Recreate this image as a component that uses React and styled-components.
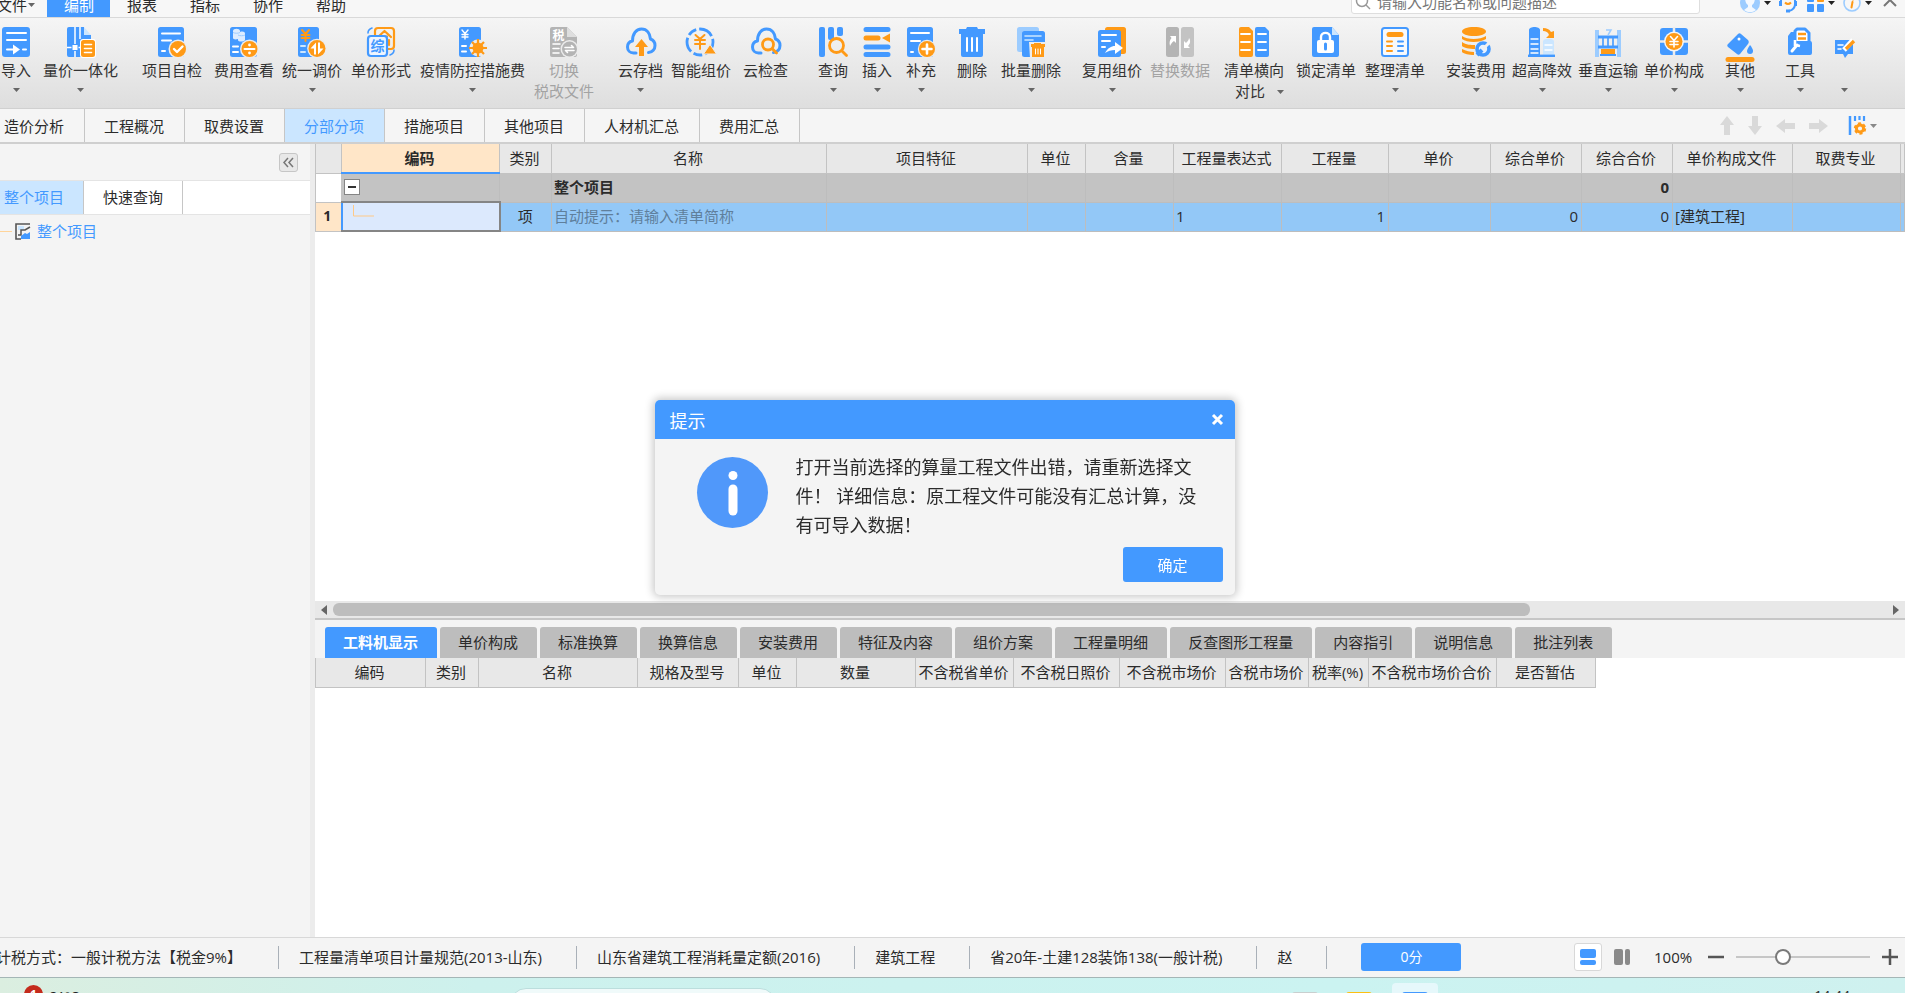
import React, { useState } from 'react'
import styled, { createGlobalStyle, css } from 'styled-components'

const BLUE = '#4399ff'
const ORANGE = '#ff9a16'
const LIGHT_BLUE = '#cbe6ff'
const SKY = '#9cccff'
const GREY = '#b4b4b4'
const PANEL = '#f4f4f4'
const LINE = '#c3c3c3'

const GlobalStyle = createGlobalStyle`
  * {
    box-sizing: border-box;
  }
  body {
    margin: 0;
    color: #2b2b2b;
    background: ${PANEL};
    font-family: "Open Sans", "Noto Sans CJK SC", sans-serif;
    font-size: 15px;
    line-height: 20px;
  }
  button, input {
    font: inherit;
    color: inherit;
    border: 0;
    padding: 0;
    margin: 0;
    background: none;
  }
  svg {
    display: block;
    overflow: visible;
    flex: none;
  }
`

const Page = styled.div`
  display: flex;
  flex-direction: column;
  height: 100vh;
  overflow: hidden;
`

/* menu bar */

const MenuBar = styled.nav`
  display: flex;
  flex: none;
  align-items: flex-end;
  height: 18px;
  overflow: hidden;
  background: #f7f7f7;
  border-bottom: 1px solid #d9d9d9;
`

const MenuItem = styled.button`
  flex: none;
  height: 24px;
  padding: 0 16px 0 17px;
  white-space: nowrap;
  ${props => props.$active && css`
    color: #fff;
    background: ${BLUE};
  `}
`

const FileItem = styled.button`
  display: flex;
  flex: none;
  align-items: center;
  justify-content: flex-end;
  gap: 1px;
  width: 47px;
  height: 24px;
  padding-right: 12px;
  white-space: nowrap;
`

const SearchBox = styled.label`
  display: flex;
  align-items: center;
  gap: 6px;
  width: 349px;
  height: 24px;
  margin: 0 40px 3px auto;
  padding: 0 3px;
  background: #fff;
  border: 1px solid #dedede;
  border-radius: 3px;
`

const SearchInput = styled.input`
  flex: 1;
  min-width: 0;
  outline: 0;
  &::placeholder {
    color: #777;
    opacity: 1;
  }
`

const MenuIcons = styled.div`
  display: flex;
  align-items: center;
  gap: 6px;
  height: 28px;
  padding-right: 8px;
`

const IconButton = styled.button`
  display: flex;
  align-items: center;
  gap: 4px;
  padding-right: ${props => props.$pad || 0}px;
`

/* ribbon */

const Ribbon = styled.div`
  display: flex;
  flex: none;
  height: 91px;
  padding-left: 1px;
  overflow: hidden;
  background: linear-gradient(#f5f5f5, #dedede);
  border-bottom: 1px solid #d0d0d0;
`

const Tool = styled.button`
  display: flex;
  flex: none;
  flex-direction: column;
  align-items: center;
  width: ${props => props.$width}px;
  margin-left: ${props => props.$gap}px;
  padding-top: 9px;
  line-height: 21px;
  white-space: nowrap;
  color: ${props => props.disabled ? '#a3a3a3' : '#333'};
`

const ToolLabel = styled.span`
  height: 21px;
  margin-top: 3px;
`

const ToolSecond = styled.span`
  display: flex;
  align-items: center;
  justify-content: ${props => props.$split ? 'flex-end' : 'center'};
  gap: 12px;
  width: 100%;
  height: ${props => props.$bare ? 17 : 21}px;
`

/* section tabs */

const SectionBar = styled.div`
  display: flex;
  flex: none;
  align-items: stretch;
  height: 35px;
  background: #f5f5f5;
  border-bottom: 2px solid #cfcfcf;
`

const SectionTab = styled.button`
  padding: 0 20px 0 19px;
  border-right: 1px solid #c6c6c6;
  white-space: nowrap;
  &:first-child {
    padding-left: 4px;
  }
  ${props => props.$active && css`
    color: ${BLUE};
    background: ${LIGHT_BLUE};
  `}
`

const SectionActions = styled.div`
  display: flex;
  align-items: center;
  gap: 12px;
  margin-left: auto;
  padding-right: 28px;
`

/* work area */

const Work = styled.div`
  display: flex;
  flex: 1;
  min-height: 0;
`

const Side = styled.aside`
  flex: none;
  width: 315px;
  background: ${PANEL};
  border-right: 5px solid #ececec;
`

const SideTop = styled.div`
  display: flex;
  align-items: center;
  justify-content: flex-end;
  height: 36px;
  padding-right: 12px;
`

const CollapseButton = styled.button`
  display: flex;
  align-items: center;
  justify-content: center;
  width: 19px;
  height: 19px;
  background: #e8e8e8;
  border: 1px solid #c6c6c6;
  border-radius: 3px;
`

const SideTabs = styled.div`
  display: flex;
  height: 35px;
  background: #fff;
  border-top: 1px solid #e4e4e4;
  border-bottom: 1px solid #e4e4e4;
`

const SideTab = styled(SectionTab)`
  padding: 0 19px 2px;
`

const TreeItem = styled.a`
  display: flex;
  align-items: center;
  height: 32px;
  color: ${BLUE};
  text-decoration: none;
`

const TreeText = styled.span`
  padding-left: 6px;
`

const Content = styled.main`
  display: flex;
  flex: 1;
  flex-direction: column;
  min-width: 0;
`

const UpperPane = styled.div`
  flex: 457 1 0;
  min-height: 0;
  overflow: hidden;
  background: #fff;
`

const LowerPane = styled(UpperPane)`
  flex: 279 1 0;
`

const Grid = styled.table`
  width: 100%;
  table-layout: fixed;
  border-collapse: collapse;
  white-space: nowrap;
`

const HeadCell = styled.th`
  height: 29px;
  padding: 0 2px 0 0;
  font-weight: ${props => props.$active ? 700 : 400};
  background: ${props => props.$active ? '#ffe6c8' : '#e8e8e8'};
  border: 1px solid ${LINE};
  border-top: 0;
  ${props => props.$active && css`
    border-bottom: 2px solid ${BLUE};
  `}
`

const Cell = styled.td`
  height: 29px;
  padding: 0 3px 2px 2px;
  text-align: ${props => props.$align || 'left'};
  border: 1px solid #bdbdbd;
  overflow: hidden;
`

const GroupRow = styled.tr`
  font-weight: 700;
  background: #c3c3c3;
`

const ItemRow = styled.tr`
  background: #93c8f7;
`

const RowNumber = styled.th`
  padding: 0 2px 2px 0;
  font-size: 14px;
  border: 1px solid ${LINE};
  background: ${props => props.$active ? '#ffe6c8' : '#fff'};
`

const SelectedCell = styled.td`
  padding: 0 10px 3px;
  background: #dce9fd;
  border: 2px solid #858585;
  border-left-color: ${BLUE};
`

const Hint = styled.span`
  color: #5f7f9c;
`

const FoldButton = styled.button`
  display: flex;
  align-items: center;
  justify-content: center;
  width: 16px;
  height: 16px;
  background: #fff;
  border: 1px solid #858585;
`

const ScrollBar = styled.div`
  display: flex;
  flex: none;
  align-items: center;
  gap: 6px;
  height: 17px;
  padding: 0 6px;
  background: #e8e8e8;
`

const ScrollTrack = styled.div`
  flex: 1;
`

const ScrollThumb = styled.div`
  width: 77%;
  height: 13px;
  border-radius: 6px;
  background: #bdbdbd;
`

const DetailTabs = styled.div`
  display: flex;
  flex: none;
  align-items: flex-end;
  gap: 3px;
  height: 40px;
  padding: 0 10px;
  background: ${PANEL};
  border-top: 2px solid #c6c6c6;
`

const DetailTab = styled.button`
  height: 31px;
  padding: 0 19px 2px 18px;
  white-space: nowrap;
  background: #bdbdbd;
  border-radius: 3px 3px 0 0;
  ${props => props.$active && css`
    color: #fff;
    font-weight: 700;
    background: ${BLUE};
  `}
`

const DetailGrid = styled(Grid)`
  width: 1280px;
`

/* status bar */

const StatusBar = styled.footer`
  display: flex;
  flex: none;
  align-items: center;
  height: 41px;
  padding-bottom: 1px;
  background: ${PANEL};
  border-top: 1px solid #d8d8d8;
  border-bottom: 1px solid #a4b6b6;
  white-space: nowrap;
`

const StatusItem = styled.span`
  flex: none;
  margin-left: 20px;
  padding-right: 34px;
  &:first-child {
    display: flex;
    justify-content: flex-end;
    width: 278px;
    padding-right: 36px;
    margin: 0;
  }
`

const Separator = styled.span`
  width: 1px;
  height: 23px;
  background: #a9b0b8;
`

const ScoreButton = styled.button`
  width: 100px;
  height: 28px;
  margin-left: 34px;
  font-size: 14px;
  color: #fff;
  background: ${BLUE};
  border-radius: 3px;
`

const ViewTools = styled.div`
  display: flex;
  align-items: center;
  gap: 12px;
  margin-left: auto;
  padding-right: 7px;
`

const ViewButton = styled.button`
  display: flex;
  align-items: center;
  justify-content: center;
  height: 28px;
  ${props => props.$active && css`
    width: 28px;
    background: #fff;
    border: 1px solid #d8d8d8;
    border-radius: 3px;
  `}
`

const ZoomValue = styled.output`
  width: 42px;
  margin-left: 12px;
`

const ZoomSlider = styled.input`
  width: 134px;
  height: 16px;
  appearance: none;
  &::-webkit-slider-runnable-track {
    height: 2px;
    background: #c6c6c6;
  }
  &::-webkit-slider-thumb {
    appearance: none;
    width: 16px;
    height: 16px;
    margin-top: -7px;
    background: #fff;
    border: 2px solid #7a7a7a;
    border-radius: 50%;
  }
`

/* desktop task bar */

const TaskBar = styled.div`
  display: flex;
  flex: none;
  align-items: flex-start;
  height: 15px;
  overflow: hidden;
  background: linear-gradient(90deg, #dbeee0, #cdf1ed 25%, #cbf3f1 70%, #cff1ef);
`

const Badge = styled.span`
  flex: none;
  width: 19px;
  height: 19px;
  margin: 7px 7px 0 24px;
  font-size: 12px;
  font-weight: 700;
  line-height: 19px;
  text-align: center;
  color: #fff;
  background: #c42b1c;
  border-radius: 50%;
`

const Temperature = styled.span`
  width: 460px;
  margin-top: 10px;
  font-size: 13px;
  line-height: 16px;
  color: #222;
`

const TaskSearch = styled.span`
  width: 266px;
  height: 32px;
  margin-top: 10px;
  background: #f0fafa;
  border: 1px solid #bcdedd;
  border-radius: 16px;
`

const TaskApps = styled.div`
  display: flex;
  align-items: flex-start;
  gap: 28px;
  margin-left: 516px;
`

const TaskApp = styled.span`
  width: 26px;
  height: 24px;
  margin-top: 14px;
  background: ${props => props.$color};
  border-radius: 3px;
`

const TaskWindow = styled.span`
  display: flex;
  justify-content: center;
  width: 46px;
  height: 36px;
  margin-left: -8px;
  margin-top: 5px;
  background: #e6f8fb;
  border-radius: 4px;
`

const TaskWindowIcon = styled.span`
  width: 26px;
  height: 20px;
  margin-top: 9px;
  background: ${BLUE};
  border-radius: 3px;
`

const Clock = styled.span`
  margin: 9px 55px 0 auto;
  font-size: 14px;
  line-height: 18px;
`

/* message box */

const Overlay = styled.div`
  position: fixed;
  inset: 0;
  display: flex;
  align-items: center;
  justify-content: center;
  padding: 2px 16px 0 0;
`

const Dialog = styled.section`
  width: 580px;
  overflow: hidden;
  background: ${PANEL};
  border-radius: 5px;
  box-shadow: 0 0 8px 2px rgba(0, 0, 0, 0.22);
`

const DialogTitle = styled.header`
  display: flex;
  align-items: center;
  justify-content: space-between;
  height: 39px;
  padding: 2px 11px 0 15px;
  font-size: 18px;
  color: #fff;
  background: ${BLUE};
`

const DialogBody = styled.div`
  display: flex;
  gap: 28px;
  padding: 14px 32px 0 42px;
`

const DialogIcon = styled.div`
  padding-top: 4px;
`

const Message = styled.p`
  flex: 1;
  margin: 0;
  font-size: 18px;
  line-height: 29px;
`

const DialogFooter = styled.div`
  display: flex;
  justify-content: flex-end;
  padding: 7px 12px 13px;
`

const OkButton = styled.button`
  width: 100px;
  height: 35px;
  color: #fff;
  background: ${BLUE};
  border-radius: 3px;
`

const Caret = ({ color = '#666' }) => (
  <svg width="7" height="4" viewBox="0 0 7 4"><path d="M0 0h7L3.5 4z" fill={color}/></svg>
)

const Rules = ({ d, color = '#fff', width = 2 }) => (
  <path d={d} stroke={color} strokeWidth={width} strokeLinecap="round" strokeLinejoin="round" fill="none"/>
)

const Glyph = ({ x, y, size, color = '#fff', children }) => (
  <text x={x} y={y} fontSize={size} fontWeight="700" fill={color} textAnchor="middle">{children}</text>
)

const Cloud = () => (
  <Rules color={BLUE} width={3} d="M10 26H7.500C4 26 1.500 23.500 1.500 20c0-3 2-5.500 5-6C6.500 7 10 2 15.500 2S24 6.500 24.500 12c2.800 1 4.500 3 4.500 6.500 0 3.500-2.500 7-6.500 7"/>
)

const Lens = ({ x, y, r = 6 }) => (
  <g stroke={ORANGE} strokeWidth="2.800" fill="none" strokeLinecap="round">
    <circle cx={x} cy={y} r={r}/>
    <path d={`M${x + r - 1} ${y + r - 1}l4 4`}/>
  </g>
)

const icons = {
  import: (
    <g>
      <rect x="1" width="28" height="30" rx="3" fill={BLUE}/>
      <Rules d="M6 6h19M6 13h19M6 22.500h8M22 22.500h3"/>
      <path d="M12 17.500l7 5-7 5z" fill="#fff"/>
    </g>
  ),
  merge: (
    <g>
      <path d="M3 0h15v8h7v22H3a2 2 0 0 1-2-2V2a2 2 0 0 1 2-2z" fill={BLUE}/>
      <path d="M18 0l7 8h-7z" fill={LIGHT_BLUE}/>
      <path d="M9 0v30M1 20.500h15M14 0v12" stroke="#fff" strokeWidth="1.500"/>
      <rect x="6" y="17.500" width="6" height="6" fill="#fff" stroke={BLUE}/>
      <rect x="14" y="12" width="16" height="19" rx="3" fill="#fff"/>
      <rect x="15" y="13" width="14" height="17" rx="2.500" fill={ORANGE}/>
      <Rules d="M18.500 17.500h7M18.500 21.500h7M18.500 25.500h7" width={1.6}/>
    </g>
  ),
  check: (
    <g>
      <rect x="1" width="26" height="30" rx="2.500" fill={BLUE}/>
      <Rules d="M5 6.500h18M5 13.500h9M5 24h3"/>
      <circle cx="21" cy="22" r="9.500" fill="#ececec"/>
      <circle cx="21" cy="22" r="8" fill={ORANGE}/>
      <Rules d="M17 22l3 3 5.500-5.500" width={2.4}/>
    </g>
  ),
  fee: (
    <g>
      <rect x="1" width="27" height="30" rx="2.500" fill={BLUE}/>
      <path d="M4 4c0-3 7-3 7 0v1c3-1 5 0 5 1.500V13c-1 2-7 2-7 0v-1c-3 1-5 0-5-1z" fill="#dcecff"/>
      <path d="M4 5.500c2 1 5 1 7 0M9 8c2 1 5 1 7 0" stroke={SKY} fill="none"/>
      <Rules d="M4 19.500h5M4 25h5"/>
      <circle cx="20.500" cy="22" r="9.500" fill="#ececec"/>
      <circle cx="20.500" cy="22" r="8" fill={ORANGE}/>
      <Rules d="M15.500 22h10" width={2}/>
      <circle cx="20.500" cy="18" r="1.400" fill="#fff"/>
      <circle cx="20.500" cy="26" r="1.400" fill="#fff"/>
    </g>
  ),
  adjust: (
    <g>
      <rect x="1" width="21" height="30" rx="2.500" fill={BLUE}/>
      <Rules color={ORANGE} d="M5 3l3.500 4L12 3M8.500 7v7M4.500 8h8M4.500 11h8" width={2}/>
      <Rules d="M4 19h4M4 25h4" color={LIGHT_BLUE}/>
      <circle cx="20" cy="21.500" r="9.800" fill="#ececec"/>
      <circle cx="20" cy="21.500" r="8.500" fill={ORANGE}/>
      <path d="M19 15.500v12h-2v-6h-3.500zM21 27.500v-12h2v6h3.500z" fill="#fff"/>
    </g>
  ),
  form: (
    <g>
      <rect x="9" y="1" width="19" height="21" rx="3" fill="none" stroke={ORANGE} strokeWidth="2.200"/>
      <Rules color={ORANGE} d="M12 10l6.500-6 6.500 6M16 9.500h5M23 13v5" width={2.2}/>
      <rect x="2" y="9" width="19" height="20" rx="3" fill="#eef5ff" stroke={BLUE} strokeWidth="2.200"/>
      <Glyph x="11.500" y="24" size="14" color={BLUE}>综</Glyph>
      <Rules color={BLUE} d="M2 6c0-2 1-4 4-5M28 23c0 3-1 4-4 5" width={1.6}/>
    </g>
  ),
  covid: (
    <g>
      <rect x="1" width="22" height="30" rx="2.500" fill={BLUE}/>
      <Rules d="M4 3l3 3.500L10 3M7 6.500V12M4 7.500h6M4 10h6" width={1.4}/>
      <Rules d="M4 19h4M4 24.500h4"/>
      <circle cx="20" cy="21" r="8.500" fill="#ececec"/>
      <path d="M20 12v18M11 21h18M14 15l12 12M26 15L14 27" stroke={ORANGE} strokeWidth="2.200"/>
      <circle cx="20" cy="21" r="5.500" fill={ORANGE}/>
    </g>
  ),
  tax: (
    <g>
      <path d="M3 0h15l10 10v18a2 2 0 0 1-2 2H3a2 2 0 0 1-2-2V2a2 2 0 0 1 2-2z" fill={GREY}/>
      <path d="M18 0l10 10H18z" fill="#dedede"/>
      <Glyph x="9.500" y="13" size="12">税</Glyph>
      <Rules d="M4 17h7M4 21.500h6M4 26h6" width={1.6}/>
      <circle cx="20.500" cy="22" r="9" fill="#ececec"/>
      <circle cx="20.500" cy="22" r="7.500" fill={GREY}/>
      <Rules d="M16 20.500h8.500l-2-2M25 23.500h-8.500l2 2" width={1.6}/>
    </g>
  ),
  cloudUp: (
    <g>
      <Cloud/>
      <path d="M15.500 12l6.500 8h-4v9h-5v-9H9z" fill={ORANGE}/>
    </g>
  ),
  smart: (
    <g>
      <circle cx="14" cy="15" r="13" fill="none" stroke={BLUE} strokeWidth="2.800" strokeDasharray="15 3 9 3"/>
      <Rules color={ORANGE} d="M9.500 8l4.500 4 4.500-4M14 12v10M9 13h10M9 17h10" width={2}/>
      <path d="M24 17.500l6.500 9.500H17.500z" fill={ORANGE} stroke="#ececec"/>
    </g>
  ),
  cloudFind: (
    <g>
      <Cloud/>
      <Lens x={17} y={17.5} r={5.5}/>
    </g>
  ),
  query: (
    <g>
      <rect x="1" width="6" height="30" rx="2" fill={BLUE}/>
      <rect x="10" width="6" height="13" rx="2" fill={BLUE}/>
      <rect x="19" width="6" height="9" rx="2" fill={BLUE}/>
      <Lens x={18.5} y={18.5} r={7}/>
    </g>
  ),
  insert: (
    <g>
      <Rules color={BLUE} d="M4 2.500h22M4 20h22M4 27.500h22" width={5}/>
      <Rules color={ORANGE} d="M4 11h12" width={5}/>
      <path d="M28 6.500v9L20 11z" fill={ORANGE}/>
    </g>
  ),
  append: (
    <g>
      <rect x="1" width="26" height="30" rx="2.500" fill={BLUE}/>
      <Rules d="M5 6h18M5 14h9M5 25h2"/>
      <circle cx="21" cy="22" r="9.200" fill="#ececec"/>
      <circle cx="21" cy="22" r="8" fill={ORANGE}/>
      <Rules d="M16.500 22h9M21 17.500v9" width={2.6}/>
    </g>
  ),
  remove: (
    <g>
      <path d="M10 0h10l1 2h7v5H2V2h7z" fill={BLUE}/>
      <path d="M4 6h22v22a2 2 0 0 1-2 2H6a2 2 0 0 1-2-2z" fill={BLUE}/>
      <Rules d="M10 11v13M15 11v13M20 11v13"/>
    </g>
  ),
  batch: (
    <g>
      <rect x="1" width="22" height="25" rx="2.500" fill={SKY}/>
      <rect x="6" y="4" width="23" height="26" rx="2.500" fill={BLUE}/>
      <Rules color={LIGHT_BLUE} d="M9 9h16M9 13h8" width={1.6}/>
      <path d="M13 15h17v16H14z" fill="#ececec"/>
      <path d="M18 16h7v1h4v3H15v-3h3z" fill={ORANGE}/>
      <path d="M16 20h12v10H16z" fill={ORANGE}/>
      <Rules d="M19.500 22v5M22 22v5M24.500 22v5" width={1}/>
    </g>
  ),
  reuse: (
    <g>
      <rect x="8" width="21" height="27" rx="2.500" fill={ORANGE}/>
      <rect x="1" y="3" width="23" height="27" rx="2.500" fill={BLUE}/>
      <Rules d="M5 8h14M5 14h8M5 20h3"/>
      <path d="M8 26c3-5 6-7 10-7v-4l8 6-8 6v-4c-4 0-7 1-10 3z" fill="#fff"/>
    </g>
  ),
  replace: (
    <g fill={GREY}>
      <rect x="1" width="13" height="30" rx="2.500"/>
      <rect x="16" width="13" height="30" rx="2.500" fill="#c3c3c3"/>
      <path d="M5 9h6v7l-2-2c-2 1-3 3-4 5-1-4 0-6 1.500-8z" fill="#fff"/>
      <path d="M25 21h-6v-7l2 2c1-1 3-3 3-5 2 3 1 6-1 8z" fill="#fff"/>
    </g>
  ),
  compare: (
    <g>
      <path d="M2 0h8l4 4v24a2 2 0 0 1-2 2H2a2 2 0 0 1-2-2V2a2 2 0 0 1 2-2z" fill={ORANGE}/>
      <path d="M18 0h8l4 4v24a2 2 0 0 1-2 2H18a2 2 0 0 1-2-2V2a2 2 0 0 1 2-2z" fill={BLUE}/>
      <Rules d="M2 7h9M2 15h9M2 23h9M19 7h8M19 15h8M19 23h8" width={1.8}/>
    </g>
  ),
  lock: (
    <g>
      <path d="M3 0h18l7 8v20a2 2 0 0 1-2 2H3a2 2 0 0 1-2-2V2a2 2 0 0 1 2-2z" fill={BLUE}/>
      <path d="M21 0l7 8h-7z" fill={LIGHT_BLUE}/>
      <rect x="6" y="13" width="17" height="13" rx="2" fill="#fff"/>
      <Rules d="M10 13V10c0-5.500 9-5.500 9 0v3" width={2.4}/>
      <path d="M14.500 17v5" stroke={BLUE} strokeWidth="3" strokeLinecap="round"/>
    </g>
  ),
  tidy: (
    <g>
      <rect x="2" y="1" width="26" height="28" rx="2.500" fill="#f7f9fc" stroke={BLUE} strokeWidth="2"/>
      <Rules color={ORANGE} d="M9 7.500h12" width={5}/>
      <Rules color={ORANGE} d="M7 14.500h5M7 19h5M7 24h5"/>
      <Rules color={BLUE} d="M18 14.500h5M18 19h5M18 24h5"/>
    </g>
  ),
  install: (
    <g>
      <path d="M1 4.500C1 2 6 0 13 0s12 2 12 4.500S20 9 13 9 1 7 1 4.500zM1 9c5 4 18 4 24 0v3c-6 4-19 4-24 0zM1 15c4 3 9 3 13 3v4C8 22 3 21 1 19zM1 22c4 2 8 3 12 3v3c-5 0-10-1-12-3z" fill={ORANGE}/>
      <circle cx="22" cy="22" r="6" fill="#e8f2ff" stroke={BLUE} strokeWidth="3.600"/>
      <path d="M21 23l-5 5" stroke={BLUE} strokeWidth="4"/>
      <path d="M22 22l6-6" stroke="#f0f0f0" strokeWidth="3"/>
    </g>
  ),
  height: (
    <g>
      <path d="M2 3c0-4 11-4 11 0v27H2z" fill={BLUE}/>
      <Rules d="M4 12h7M4 17h7M4 22h7M4 26h7" width={1.4}/>
      <path d="M16 14c1-3 10-3 11 0v14H16z" fill={LIGHT_BLUE}/>
      <Rules d="M18 18h7M18 23h7" width={1.4}/>
      <path d="M1 28.800h27" stroke={BLUE} strokeWidth="2.400"/>
      <path d="M16 1c4 0 6 1 8 4l3-1v7h-8l3-3c-1-3-3-4-6-4z" fill={ORANGE}/>
    </g>
  ),
  lift: (
    <g>
      <path d="M4 3v27M26 3v27" stroke={SKY} strokeWidth="4"/>
      <path d="M5 10h20M5 20h20" stroke={BLUE} strokeWidth="3"/>
      <path d="M10 10v10M15 10v10M20 10v10" stroke={BLUE} strokeWidth="1.600"/>
      <path d="M13 3h5l-3 5" stroke={SKY} strokeWidth="1.500" fill="none"/>
      <path d="M8 22h14v5H8z" fill={ORANGE}/>
      <path d="M7 28h16" stroke={BLUE} strokeWidth="2"/>
    </g>
  ),
  compose: (
    <g>
      <rect x="1" y="1" width="28" height="27" rx="3" fill={BLUE}/>
      <path d="M15 0v30M0 14.500h30" stroke="#ececec" strokeWidth="2.500"/>
      <circle cx="15" cy="14.500" r="10" fill="#f6f6f6"/>
      <circle cx="15" cy="14.500" r="8.500" fill={ORANGE}/>
      <Rules d="M11.500 9.500l3.500 4 3.500-4M15 13.500V20M11 14.500h8M11 17.500h8" width={1.6}/>
    </g>
  ),
  other: (
    <g>
      <path d="M13 7c1-1 2-1 3 0l7 6c1 1 1 3 0 4l-8 10c-1 1-2 1-3 0l-9-7c-1-1-1-2 0-3z" fill={BLUE}/>
      <circle cx="14" cy="12" r="1.500" fill="#fff"/>
      <path d="M25 18c3 4 3 5 3 6a3 3 0 0 1-6 0c0-1 1-3 3-6z" fill={BLUE}/>
      <path d="M3 32.500h24" stroke={ORANGE} strokeWidth="5" strokeLinecap="round"/>
    </g>
  ),
  tools: (
    <g>
      <path d="M12 2h8l4 4v11H10V4z" fill="#fff" stroke={BLUE} strokeWidth="3" strokeLinejoin="round"/>
      <path d="M13 7h8M13 11.500h8" stroke={ORANGE} strokeWidth="2.400"/>
      <path d="M6 5h3v9h16a2 2 0 0 1 2 2v10a2 2 0 0 1-2 2H5a2 2 0 0 1-2-2V9z" fill={BLUE}/>
      <path d="M7 24l5-6" stroke="#fff" strokeWidth="3" strokeLinecap="round"/>
      <path d="M10 13v5l5 1" stroke="#fff" strokeWidth="2.600" fill="none"/>
    </g>
  ),
  note: (
    <g>
      <path d="M6 13h18v14h-5l-3 4-2-4H6z" fill={BLUE}/>
      <Rules d="M9 18h5M9 22h3" width={1.6}/>
      <path d="M15 23l9-10" stroke="#fff" strokeWidth="5"/>
      <path d="M17 22l8-8" stroke={ORANGE} strokeWidth="3.400"/>
    </g>
  )
}

// gap is the space before the button, width follows the label
const tools = [
  { icon: 'import', label: '导入', width: 30, gap: 0, menu: true },
  { icon: 'merge', label: '量价一体化', width: 75, gap: 12, menu: true },
  { icon: 'check', label: '项目自检', width: 60, gap: 24 },
  { icon: 'fee', label: '费用查看', width: 60, gap: 12 },
  { icon: 'adjust', label: '统一调价', width: 60, gap: 8, menu: true },
  { icon: 'form', label: '单价形式', width: 60, gap: 9 },
  { icon: 'covid', label: '疫情防控措施费', width: 105, gap: 9, menu: true },
  { icon: 'tax', label: '切换', second: '税改文件', width: 60, gap: 9, disabled: true },
  { icon: 'cloudUp', label: '云存档', width: 45, gap: 24, menu: true },
  { icon: 'smart', label: '智能组价', width: 60, gap: 8 },
  { icon: 'cloudFind', label: '云检查', width: 45, gap: 12 },
  { icon: 'query', label: '查询', width: 30, gap: 30, menu: true },
  { icon: 'insert', label: '插入', width: 30, gap: 14, menu: true },
  { icon: 'append', label: '补充', width: 30, gap: 14, menu: true },
  { icon: 'remove', label: '删除', width: 30, gap: 21 },
  { icon: 'batch', label: '批量删除', width: 60, gap: 14, menu: true },
  { icon: 'reuse', label: '复用组价', width: 60, gap: 21, menu: true },
  { icon: 'replace', label: '替换数据', width: 60, gap: 8, disabled: true },
  { icon: 'compare', label: '清单横向', second: '对比', width: 60, gap: 14, menu: true },
  { icon: 'lock', label: '锁定清单', width: 60, gap: 12 },
  { icon: 'tidy', label: '整理清单', width: 60, gap: 9, menu: true },
  { icon: 'install', label: '安装费用', width: 60, gap: 21, menu: true },
  { icon: 'height', label: '超高降效', width: 60, gap: 6, menu: true },
  { icon: 'lift', label: '垂直运输', width: 60, gap: 6, menu: true },
  { icon: 'compose', label: '单价构成', width: 60, gap: 6, menu: true },
  { icon: 'other', label: '其他', width: 30, gap: 21, menu: true },
  { icon: 'tools', label: '工具', width: 30, gap: 30, menu: true },
  { icon: 'note', label: '', width: 30, gap: 14, menu: true }
]

const menus = ['编制', '报表', '指标', '协作', '帮助']

const sections = ['造价分析', '工程概况', '取费设置', '分部分项', '措施项目', '其他项目', '人材机汇总', '费用汇总']

const columns = [
  ['', 26], ['编码', 158], ['类别', 52], ['名称', null], ['项目特征', 201], ['单位', 58], ['含量', 88],
  ['工程量表达式', 108], ['工程量', 107], ['单价', 102], ['综合单价', 91], ['综合合价', 91],
  ['单价构成文件', 120], ['取费专业', 108], ['', 4]
]

const detailTabs = [
  '工料机显示', '单价构成', '标准换算', '换算信息', '安装费用', '特征及内容',
  '组价方案', '工程量明细', '反查图形工程量', '内容指引', '说明信息', '批注列表'
]

const detailColumns = [
  ['编码', 110], ['类别', 53], ['名称', 159], ['规格及型号', 101], ['单位', 58], ['数量', 119],
  ['不含税省单价', 98], ['不含税日照价', 106], ['不含税市场价', 106], ['含税市场价', 83],
  ['税率(%)', 60], ['不含税市场价合价', 128], ['是否暂估', 99]
]

const statusItems = [
  '计税方式：一般计税方法【税金9%】',
  '工程量清单项目计量规范(2013-山东)',
  '山东省建筑工程消耗量定额(2016)',
  '建筑工程',
  '省20年-土建128装饰138(一般计税)',
  '赵'
]

const arrows = [
  ['上移', 'M7 0l7 9h-4v10H4V9H0z', 14, 19],
  ['下移', 'M7 19l7-9h-4V0H4v10H0z', 14, 19],
  ['左移', 'M0 7l9-7v4h10v6H9v4z', 19, 14],
  ['右移', 'M19 7l-9-7v4H0v6h10v4z', 19, 14]
]

const ToolButton = ({ icon, label, second, width, gap, menu, disabled }) => (
  <Tool $width={width} $gap={gap} disabled={disabled} aria-label={label || '批注'}>
    <svg width="30" height="30" viewBox="0 0 30 30">{icons[icon]}</svg>
    <ToolLabel>{label}</ToolLabel>
    <ToolSecond $split={second && menu} $bare={!second}>
      {second}
      {menu && <Caret/>}
    </ToolSecond>
  </Tool>
)

const TopMenu = () => (
  <MenuBar>
    <FileItem>文件<Caret/></FileItem>
    {menus.map(name => (
      <MenuItem key={name} $active={name === '编制'}>{name}</MenuItem>
    ))}
    <SearchBox>
      <svg width="16" height="16" viewBox="0 0 16 16" fill="none" stroke="#999" strokeWidth="1.500">
        <circle cx="7" cy="7" r="5.500"/>
        <path d="M11 11l4 4"/>
      </svg>
      <SearchInput aria-label="搜索" placeholder="请输入功能名称或问题描述"/>
    </SearchBox>
    <MenuIcons>
      <IconButton $pad={2} aria-label="用户">
        <svg width="20" height="20" viewBox="0 0 20 20">
          <circle cx="10" cy="10" r="10" fill={SKY}/>
          <path d="M5 4h10c0 4-1 7-3 8v2l4 3c-4 3-8 3-12 0l4-3v-2c-2-1-3-4-3-8z" fill="#f4f9ff"/>
        </svg>
        <Caret color="#222"/>
      </IconButton>
      <IconButton $pad={4} aria-label="客服">
        <svg width="18" height="20" viewBox="0 0 18 20" fill="none" stroke={BLUE} strokeWidth="2">
          <path d="M2 10V8a7 7 0 0 1 14 0v3c0 4-2 6-6 7"/>
          <path d="M1.500 8v5M16.500 8v5" strokeWidth="3"/>
          <path d="M6 9.500c2 2 4 2 6 0" stroke={ORANGE}/>
          <path d="M7 18h4" strokeWidth="3"/>
        </svg>
      </IconButton>
      <IconButton $pad={2} aria-label="应用">
        <svg width="17" height="18" viewBox="0 0 17 18" fill={BLUE}>
          <rect width="7" height="8" rx="1"/>
          <rect x="10" width="7" height="8" rx="1" fill={ORANGE}/>
          <rect y="10" width="7" height="8" rx="1"/>
          <rect x="10" y="10" width="7" height="8" rx="1"/>
        </svg>
        <Caret color="#222"/>
      </IconButton>
      <IconButton $pad={5} aria-label="信息">
        <svg width="18" height="18" viewBox="0 0 18 18">
          <circle cx="9" cy="9" r="8" fill="none" stroke={SKY} strokeWidth="1.600"/>
          <path d="M10 4.500v1M9.500 8l-1 5.500" stroke={ORANGE} strokeWidth="2" strokeLinecap="round"/>
        </svg>
        <Caret color="#222"/>
      </IconButton>
      <IconButton aria-label="收起">
        <svg width="14" height="8" viewBox="0 0 14 8"><path d="M1 7l6-6 6 6" stroke="#777" strokeWidth="2" fill="none"/></svg>
      </IconButton>
    </MenuIcons>
  </MenuBar>
)

const Sections = () => (
  <SectionBar>
    {sections.map(name => (
      <SectionTab key={name} $active={name === '分部分项'}>{name}</SectionTab>
    ))}
    <SectionActions>
      {arrows.map(([name, d, width, height]) => (
        <IconButton key={name} $pad={2} aria-label={name}>
          <svg width={width} height={height} viewBox={`0 0 ${width} ${height}`}><path d={d} fill="#d9d9d9"/></svg>
        </IconButton>
      ))}
      <IconButton aria-label="列设置">
        <svg width="24" height="19" viewBox="0 0 24 19">
          <path d="M8 0v19" stroke={BLUE} strokeWidth="2.500"/>
          <path d="M13 0v5M17.500 0v4M22 0v5" stroke={BLUE} strokeWidth="2.200"/>
          <circle cx="18" cy="12.500" r="3.600" fill="none" stroke={ORANGE} strokeWidth="3"/>
          <circle cx="18" cy="12.500" r="5.200" fill="none" stroke={ORANGE} strokeWidth="2" strokeDasharray="3 2.450"/>
        </svg>
        <Caret color="#888"/>
      </IconButton>
    </SectionActions>
  </SectionBar>
)

const SidePanel = () => (
  <Side>
    <SideTop>
      <CollapseButton aria-label="折叠">
        <svg width="11" height="9" viewBox="0 0 11 9"><path d="M5 0L1 4.500 5 9M10 0L6 4.500 10 9" stroke="#777" strokeWidth="1.500" fill="none"/></svg>
      </CollapseButton>
    </SideTop>
    <SideTabs>
      <SideTab $active>整个项目</SideTab>
      <SideTab>快速查询</SideTab>
    </SideTabs>
    <TreeItem href="#project">
      <svg width="31" height="17" viewBox="0 0 31 17">
        <path d="M0 8.500h12" stroke="#ffd49a"/>
        <path d="M30 1H16v15h5" stroke="#555" strokeWidth="1.600" fill="none"/>
        <path d="M18 3h6v4h-6z" fill={LIGHT_BLUE}/>
        <path d="M18 12h3V7h4l5-3" stroke="#555" strokeWidth="1.500" fill="none"/>
        <path d="M21 16v-3l4-3 2 1 3-2v7z" fill={BLUE}/>
      </svg>
      <TreeText>整个项目</TreeText>
    </TreeItem>
  </Side>
)

const ProjectGrid = () => (
  <Grid>
    <colgroup>
      {columns.map(([, width], i) => <col key={i} width={width || undefined}/>)}
    </colgroup>
    <thead>
      <tr>
        {columns.map(([name], i) => <HeadCell key={i} $active={name === '编码'}>{name}</HeadCell>)}
      </tr>
    </thead>
    <tbody>
      <GroupRow>
        <RowNumber/>
        <Cell><FoldButton aria-label="收起项目"><svg width="8" height="2"><path d="M0 1h8" stroke="#333" strokeWidth="2"/></svg></FoldButton></Cell>
        <Cell/>
        <Cell>整个项目</Cell>
        <Cell/><Cell/><Cell/><Cell/><Cell/><Cell/><Cell/>
        <Cell $align="right">0</Cell>
        <Cell/><Cell/><Cell/>
      </GroupRow>
      <ItemRow>
        <RowNumber $active>1</RowNumber>
        <SelectedCell>
          <svg width="21" height="20" viewBox="0 0 21 20"><path d="M.5 0v11H21" stroke="#ffc987" fill="none"/></svg>
        </SelectedCell>
        <Cell $align="center">项</Cell>
        <Cell><Hint>自动提示：请输入清单简称</Hint></Cell>
        <Cell/><Cell/><Cell/>
        <Cell>1</Cell>
        <Cell $align="right">1</Cell>
        <Cell/>
        <Cell $align="right">0</Cell>
        <Cell $align="right">0</Cell>
        <Cell>[建筑工程]</Cell>
        <Cell/><Cell/>
      </ItemRow>
    </tbody>
  </Grid>
)

const Details = () => (
  <React.Fragment>
    <DetailTabs>
      {detailTabs.map((name, i) => <DetailTab key={name} $active={i === 0}>{name}</DetailTab>)}
    </DetailTabs>
    <LowerPane>
      <DetailGrid>
        <colgroup>
          {detailColumns.map(([name, width]) => <col key={name} width={width}/>)}
        </colgroup>
        <thead>
          <tr>
            {detailColumns.map(([name]) => <HeadCell key={name}>{name}</HeadCell>)}
          </tr>
        </thead>
      </DetailGrid>
    </LowerPane>
  </React.Fragment>
)

const Status = () => (
  <StatusBar>
    {statusItems.map(text => (
      <React.Fragment key={text}>
        <StatusItem>{text}</StatusItem>
        <Separator/>
      </React.Fragment>
    ))}
    <ScoreButton>0分</ScoreButton>
    <ViewTools>
      <ViewButton $active aria-label="上下布局">
        <svg width="16" height="16" viewBox="0 0 16 16" fill={BLUE}>
          <rect width="16" height="9" rx="2"/>
          <rect y="11" width="16" height="5" rx="2"/>
        </svg>
      </ViewButton>
      <ViewButton aria-label="左右布局">
        <svg width="16" height="16" viewBox="0 0 16 16" fill="#8a8a8a">
          <rect width="9" height="16" rx="2"/>
          <rect x="11" width="5" height="16" rx="2"/>
        </svg>
      </ViewButton>
      <ZoomValue>100%</ZoomValue>
      <IconButton aria-label="缩小">
        <svg width="16" height="16"><path d="M0 8h16" stroke="#555" strokeWidth="2.500"/></svg>
      </IconButton>
      <ZoomSlider type="range" defaultValue="33" aria-label="缩放"/>
      <IconButton aria-label="放大">
        <svg width="16" height="16"><path d="M0 8h16M8 0v16" stroke="#555" strokeWidth="2.500"/></svg>
      </IconButton>
    </ViewTools>
  </StatusBar>
)

const MessageBox = ({ onClose }) => (
  <Overlay>
    <Dialog role="dialog" aria-label="提示">
      <DialogTitle>
        提示
        <IconButton aria-label="关闭" onClick={onClose}>
          <svg width="13" height="14" viewBox="0 0 13 14"><path d="M2 1l9 9M11 1l-9 9" stroke="#fff" strokeWidth="3"/></svg>
        </IconButton>
      </DialogTitle>
      <DialogBody>
        <DialogIcon>
          <svg width="71" height="71" viewBox="0 0 71 71">
            <circle cx="35.500" cy="35.500" r="35.500" fill="#5098fa"/>
            <circle cx="36" cy="18.500" r="4.500" fill="#fff"/>
            <path d="M36 32v22" stroke="#fff" strokeWidth="9" strokeLinecap="round"/>
          </svg>
        </DialogIcon>
        <Message>打开当前选择的算量工程文件出错，请重新选择文件！ 详细信息：原工程文件可能没有汇总计算，没有可导入数据！</Message>
      </DialogBody>
      <DialogFooter>
        <OkButton onClick={onClose}>确定</OkButton>
      </DialogFooter>
    </Dialog>
  </Overlay>
)

const App = () => {
  const [isOpen, setIsOpen] = useState(true)

  return (
    <Page>
      <GlobalStyle/>
      <TopMenu/>
      <Ribbon>
        {tools.map(tool => <ToolButton key={tool.icon} {...tool}/>)}
      </Ribbon>
      <Sections/>
      <Work>
        <SidePanel/>
        <Content>
          <UpperPane>
            <ProjectGrid/>
          </UpperPane>
          <ScrollBar>
            <svg width="6" height="10"><path d="M6 0v10L0 5z" fill="#666"/></svg>
            <ScrollTrack><ScrollThumb/></ScrollTrack>
            <svg width="6" height="10"><path d="M0 0v10l6-5z" fill="#666"/></svg>
          </ScrollBar>
          <Details/>
        </Content>
      </Work>
      <Status/>
      <TaskBar>
        <Badge>1</Badge>
        <Temperature>31°C</Temperature>
        <TaskSearch/>
        <TaskApps>
          <TaskApp $color="#c9cfcf"/>
          <TaskApp $color="#fdbf12"/>
          <TaskWindow><TaskWindowIcon/></TaskWindow>
        </TaskApps>
        <Clock>14:44</Clock>
      </TaskBar>
      {isOpen && <MessageBox onClose={() => setIsOpen(false)}/>}
    </Page>
  )
}

export default App
